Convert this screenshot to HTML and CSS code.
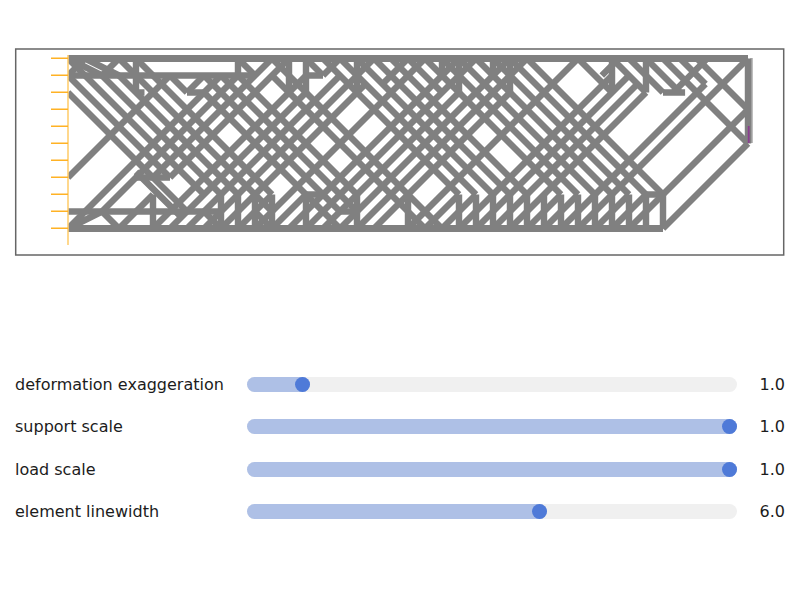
FILE: index.html
```html
<!DOCTYPE html>
<html lang="en">
<head>
<meta charset="utf-8">
<title>Truss</title>
<link rel="stylesheet" href="styles.css">
</head>
<body>
<svg class="plot" viewBox="0 0 800 256" width="800" height="256">
  <clipPath id="span"><rect x="0" y="-1" width="41" height="12"/></clipPath>
  <rect class="frame" x="15.7" y="49" width="768" height="206"/>
  <path class="ghost" d="M751.5 58V143"/>
  <g transform="translate(68 58.5) scale(17)" clip-path="url(#span)">
    <path class="bar" d="M4 6.67L6.67 9.33M0 2L7 9M0 1L6 7M8 9L9 10M0 0L8 8M2 1L9 8M3 1L10 8M11 9L12 10M3 0L12 9M4 0l8 8M6 1L7 2M8 2L16 10M8 1L16 9M9 1L17 9M10 1L17 8M10 0L11 1M12 1L21 10M12 0L22 10M14 0L15 1M15 0l8 8M16 0l8 8M17 0l8 8M18 0l8 8M19 0l8 8M20 0L22 2M21 0l8 8M22 0l8 8M23 0l8 8M24 0l8 8M25 0l8 8M26 0l8 8M27 0l8 8M30 0L32 2M32 0L34 2M33 0L35 2M34 0L36 2M35 0L40 5M36 0L37.5 1.5M37 0L40 3M2 9L3 10"/>
    <path class="bar" d="M1 0L0 1M3 0L2 1M6 1L0 7M8 1L7 2M9 1L0 10M10 1L2 9M12 0L5 7M13 0L6 7M5 8L3 10M14 1L5 10M16 0L15 1M14 2L6 10M16 1L7 10M18 0L8 10M17.5 1.5L9 10M20 0L18.5 1.5M12 8L10 10M21 0L11 10M14 8L12 10M23 0l-10 10M24 0l-10 10M23 2L15 10M26 0l-10 10M27 0l-10 10M26 2L18 10M30 0l-10 10M23 8L21 10M24 8L22 10M32.4 0L31.4 1M32 1L23 10M33 1L24 10M33.5 1.5L25 10M34 2L26 10M37.6 0L35.6 2M29 8L27 10M30 8L28 10M37.5 1.5L29 10M40 0l-10 10M33 8L31 10M34 8L32 10M40 3L33 10M40 5L35 10M0 10L2 9M0 0L2 1M1 0L3 1"/>
    <path class="bar" d="M0 1H11M0 9H9M4 7H6M4 2H4.5M7 2H8M14 1H15M14 8H15M16 9H17M34 8H35M35 2H36.3M4 0V2M10 0V1M13 0V2M14 0V2M17 0V2M22 0V1M23 0V2M25 0V1M26 0V2M32 0V2M34 0V2M5 8V10M9 8V10M10 8V10M11 8V10M12 8V10M14 8V10M17 8V10M20 8V10M23 8V10M24 8V10M25 8V10M26 8V10M27 8V10M28 8V10M29 8V10M30 8V10M31 8V10M32 8V10M33 8V10M34 8V10M35 8V10M40 0V5"/>
    <path class="chord" d="M0 0H40M0 10H35"/>
  </g>
  <path class="support-mast" d="M68 55V245"/>
  <path class="support-tick" d="M51 58.3H68M51 75.3H68M51 92.3H68M51 109.3H68M51 126.3H68M51 143.3H68M51 160.3H68M51 177.3H68M51 194.3H68M51 211.3H68M51 228.3H68"/>
  <path class="load" d="M748.7 126V143"/>
</svg>
<section class="controls">
  <div class="row"><span class="label">deformation exaggeration</span><div class="track"><div class="fill" style="width:12.8%"><span class="thumb"></span></div></div><span class="value">1.0</span></div>
  <div class="row"><span class="label">support scale</span><div class="track"><div class="fill" style="width:100%"><span class="thumb"></span></div></div><span class="value">1.0</span></div>
  <div class="row"><span class="label">load scale</span><div class="track"><div class="fill" style="width:100%"><span class="thumb"></span></div></div><span class="value">1.0</span></div>
  <div class="row"><span class="label">element linewidth</span><div class="track"><div class="fill" style="width:61.2%"><span class="thumb"></span></div></div><span class="value">6.0</span></div>
</section>
</body>
</html>
```
FILE: styles.css
```css
html, body {
  margin: 0;
  background: #fff;
}
body {
  width: 800px;
  height: 600px;
  overflow: hidden;
  font-family: "DejaVu Sans", sans-serif;
  color: #1c1c1c;
}
.plot {
  display: block;
}
.frame {
  fill: none;
  stroke: #666;
  stroke-width: 1.5;
}
.ghost {
  fill: none;
  stroke: #a8a8a8;
  stroke-width: 2.5;
}
.bar {
  fill: none;
  stroke: #808080;
  stroke-width: 0.38;
}
.chord {
  fill: none;
  stroke: #808080;
  stroke-width: 0.4;
}
.support-mast {
  fill: none;
  stroke: #ffcf70;
  stroke-width: 1.6;
}
.support-tick {
  fill: none;
  stroke: #ffb224;
  stroke-width: 1.5;
}
.load {
  fill: none;
  stroke: #8a3d8f;
  stroke-width: 1.8;
}
.controls {
  display: flex;
  flex-direction: column;
  gap: 27.5px;
  padding: 120.5px 15px 0;
}
.row {
  display: grid;
  grid-template-columns: 232px 490px 1fr;
  align-items: center;
  height: 15px;
}
.label, .value {
  font-size: 16px;
  line-height: 15px;
  white-space: nowrap;
}
.value {
  text-align: right;
}
.track {
  height: 15px;
  border-radius: 7.5px;
  background: #f0f0f0;
}
.fill {
  position: relative;
  height: 100%;
  border-radius: 7.5px;
  background: #aec0e6;
}
.thumb {
  position: absolute;
  right: 0;
  top: 0;
  width: 15px;
  height: 15px;
  border-radius: 50%;
  background: #4f7ad8;
}
```
